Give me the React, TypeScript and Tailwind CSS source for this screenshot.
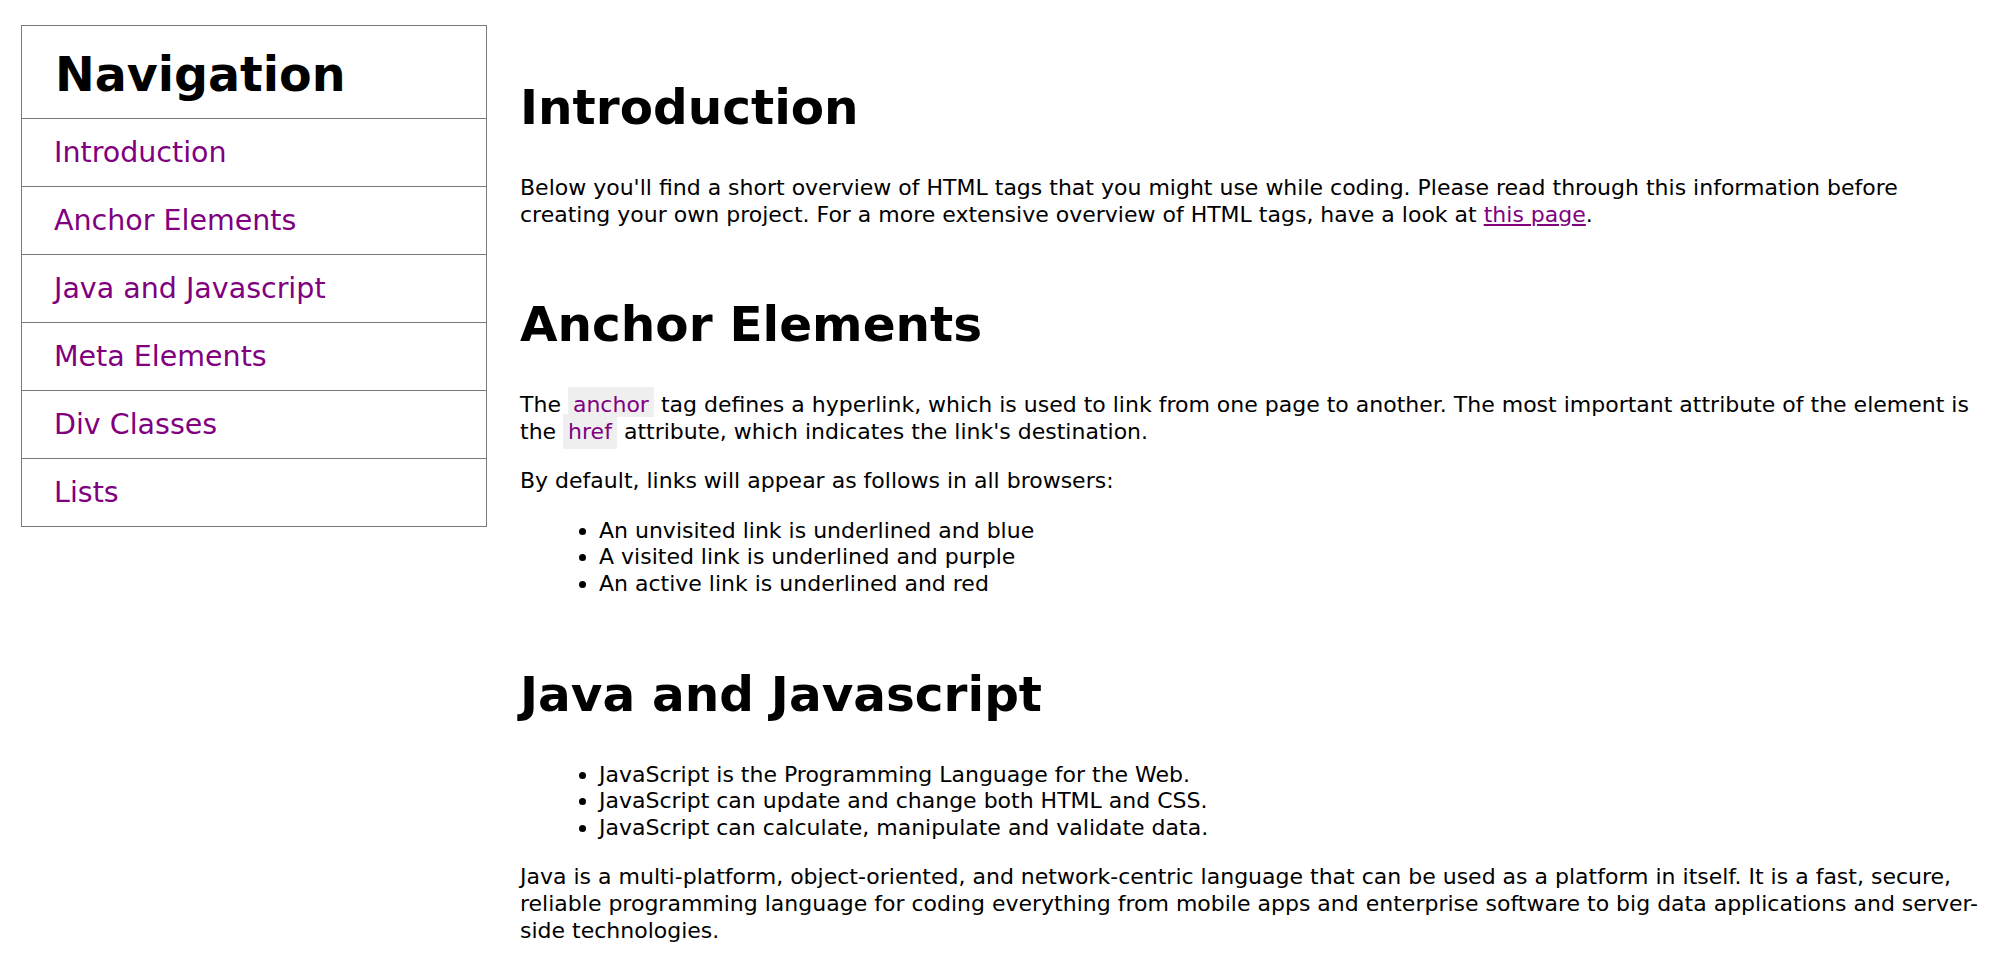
import React from "react"

const navItems = [
  "Introduction",
  "Anchor Elements",
  "Java and Javascript",
  "Meta Elements",
  "Div Classes",
  "Lists",
]

function Code({ children, className = "" }: { children: React.ReactNode; className?: string }) {
  return (
    <code className={`bg-[#efefef] px-[5px] pt-[5px] text-[#800080] [font-family:inherit] ${className}`}>
      {children}
    </code>
  )
}

function Heading({ children }: { children: React.ReactNode }) {
  return <h2 className="mb-[39px] text-[48.5px] font-bold leading-[58px] text-black">{children}</h2>
}

export default function App() {
  return (
    <div className="flex min-h-screen bg-white text-black [font-family:'DejaVu_Sans',Verdana,sans-serif]">
      {/* Sidebar navigation */}
      <nav className="ml-[21px] mt-[25px] w-[466px] shrink-0 self-start border border-[#7a7a7a]">
        <div className="h-[93px] border-b border-[#7a7a7a] pl-[33px] pt-[21px]">
          <h1 className="text-[47.5px] font-bold leading-[56px]">Navigation</h1>
        </div>
        {navItems.map((item, i) => (
          <a
            key={item}
            href="#"
            className={`flex items-center pl-[32px] text-[28.5px] leading-[34px] text-[#800080] ${
              i < navItems.length - 1 ? "h-[68px] border-b border-[#7a7a7a]" : "h-[67px]"
            }`}
          >
            {item}
          </a>
        ))}
      </nav>

      {/* Main content */}
      <main className="ml-[33px] flex-1 pr-[30px] pt-[78px] text-[22px] leading-[26.7px]">
        <section>
          <Heading>Introduction</Heading>
          <p>
            Below you'll find a short overview of HTML tags that you might use while coding. Please read through this
            information before creating your own project. For a more extensive overview of HTML tags, have a look at{" "}
            <a href="#" className="text-[#800080] underline">
              this page
            </a>
            .
          </p>
        </section>

        <section className="mt-[67px]">
          <Heading>Anchor Elements</Heading>
          <div className="flex flex-col gap-[22.5px]">
            <p>
              The <Code>anchor</Code> tag defines a hyperlink, which is used to link from one page to another. The most
              important attribute of the element is the <Code className="pb-[5px]">href</Code> attribute, which
              indicates the link's destination.
            </p>
            <p>By default, links will appear as follows in all browsers:</p>
            <ul className="list-disc pl-[79px]">
              <li>An unvisited link is underlined and blue</li>
              <li>A visited link is underlined and purple</li>
              <li>An active link is underlined and red</li>
            </ul>
          </div>
        </section>

        <section className="mt-[67px]">
          <Heading>Java and Javascript</Heading>
          <div className="flex flex-col gap-[22.5px]">
            <ul className="list-disc pl-[79px]">
              <li>JavaScript is the Programming Language for the Web.</li>
              <li>JavaScript can update and change both HTML and CSS.</li>
              <li>JavaScript can calculate, manipulate and validate data.</li>
            </ul>
            <p>
              Java is a multi-platform, object-oriented, and network-centric language that can be used as a platform in
              itself. It is a fast, secure, reliable programming language for coding everything from mobile apps and
              enterprise software to big data applications and server-side technologies.
            </p>
          </div>
        </section>
      </main>
    </div>
  )
}
